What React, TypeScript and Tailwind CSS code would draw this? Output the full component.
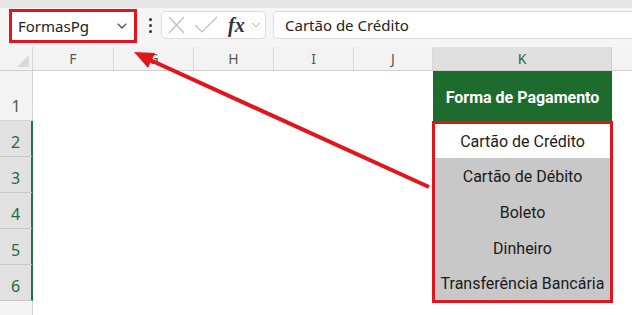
import { ChevronDown } from "lucide-react";

const cols = [
	{ name: "F", w: "w-[81px]" },
	{ name: "G", w: "w-[80px]" },
	{ name: "H", w: "w-[80px]" },
	{ name: "I", w: "w-[80px]" },
	{ name: "J", w: "w-[79px]" },
];

const options = [
	"Cartão de Crédito",
	"Cartão de Débito",
	"Boleto",
	"Dinheiro",
	"Transferência Bancária",
];

export default function App() {
	return (
		<div className="relative w-[632px] h-[315px] overflow-hidden bg-white font-['Noto_Sans',sans-serif] text-[#222]">
			<div className="h-[8px] bg-[#e6e6e6]" />

			{/* formula bar */}
			<div className="flex h-[39px] items-start bg-[#f5f5f5] pt-[1px]">
				<div className="ml-[9px] flex h-[34px] w-[128px] items-center justify-between border-[3px] border-[#e0161c] bg-white pl-[6px] pr-[4px]">
					<span className="text-[15px] leading-none">FormasPg</span>
					<ChevronDown size={16} strokeWidth={1.6} className="text-[#444]" />
				</div>
				<div className="ml-[11px] mt-[9px] flex w-[4px] flex-col items-center gap-[3px]">
					<span className="h-[3px] w-[3px] rounded-full bg-[#333]" />
					<span className="h-[3px] w-[3px] rounded-full bg-[#333]" />
					<span className="h-[3px] w-[3px] rounded-full bg-[#333]" />
				</div>
				<div className="ml-[9px] mt-[2px] flex h-[28px] w-[105px] items-center rounded-[5px] border border-[#dcdcdc] bg-white">
					<svg width="60" height="26" viewBox="0 0 60 26" className="shrink-0">
						<path d="M7 5 L22 21 M22 5 L7 21" stroke="#bdbdbd" strokeWidth="1.2" fill="none" />
						<path d="M33 13 L40 20 L55 5" stroke="#bdbdbd" strokeWidth="1.2" fill="none" />
					</svg>
					<span className="ml-[6px] font-['Liberation_Serif',serif] text-[20px] font-bold italic leading-none text-[#333]">
						fx
					</span>
					<ChevronDown size={14} strokeWidth={1.3} className="ml-[4px] text-[#888]" />
				</div>
				<div className="ml-[7px] mt-[2px] flex h-[28px] flex-1 items-center rounded-l-[5px] border border-r-0 border-[#dcdcdc] bg-white pl-[11px]">
					<span className="text-[15px] leading-none">Cartão de Crédito</span>
				</div>
			</div>

			{/* column headers */}
			<div className="flex h-[24px] border-b border-[#cfcfcf] bg-[#f3f3f3] text-[14px] text-[#555]">
				<div className="relative w-[33px] border-r border-[#d8d8d8]">
					<div className="absolute bottom-[3px] right-[3px] h-0 w-0 border-b-[12px] border-l-[12px] border-b-[#d9d9d9] border-l-transparent" />
				</div>
				{cols.map((c) => (
					<div
						key={c.name}
						className={`${c.w} flex items-center justify-center border-r border-[#dadada]`}
					>
						{c.name}
					</div>
				))}
				<div className="flex w-[179px] items-center justify-center border-r border-[#cfcfcf] bg-[#e0e0e0] text-[#1e6b3b]">
					K
				</div>
				<div className="flex-1" />
			</div>

			{/* body */}
			<div className="flex">
				<div className="flex w-[33px] flex-col text-[16px] text-[#555]">
					<div className="flex h-[50px] items-end justify-center border-b border-r border-[#d4d4d4] bg-[#f3f3f3] pb-[2px]">
						1
					</div>
					{[2, 3, 4, 5, 6].map((n) => (
						<div
							key={n}
							className="flex h-[36px] items-end justify-center border-b border-r-2 border-b-[#c9c9c9] border-r-[#217346] bg-[#e1e1e1] pb-[2px] text-[#1e6b3b]"
						>
							{n}
						</div>
					))}
					<div className="h-[20px] border-r border-[#d4d4d4] bg-[#f3f3f3]" />
				</div>

				<div className="w-[400px]" />

				<div className="flex w-[179px] flex-col font-['Roboto',sans-serif] text-[16px]">
					<div className="flex h-[50px] items-center justify-center bg-[#1e6b2e] pt-[4px] text-[16px] font-bold text-white">
						Forma de Pagamento
					</div>
					<div className="-mx-[1px] flex flex-col border-[3px] border-[#e0161c]">
						{options.map((o, i) => (
							<div
								key={o}
								className={`flex items-center justify-center pt-[2px] text-[#1b1b1b] ${
									i === 0 || i === options.length - 1 ? "h-[34px]" : "h-[36px]"
								} ${i === 0 ? "bg-white" : "bg-[#c8c8c8]"}`}
							>
								{o}
							</div>
						))}
					</div>
				</div>
				<div className="flex-1" />
			</div>

			{/* red arrow */}
			<svg
				className="pointer-events-none absolute left-0 top-0"
				width="632"
				height="315"
				viewBox="0 0 632 315"
			>
				<line x1="429" y1="187" x2="148" y2="59" stroke="#e0161c" strokeWidth="4" />
				<polygon points="134,52 148,68 155,53" fill="#e0161c" />
			</svg>
		</div>
	);
}
